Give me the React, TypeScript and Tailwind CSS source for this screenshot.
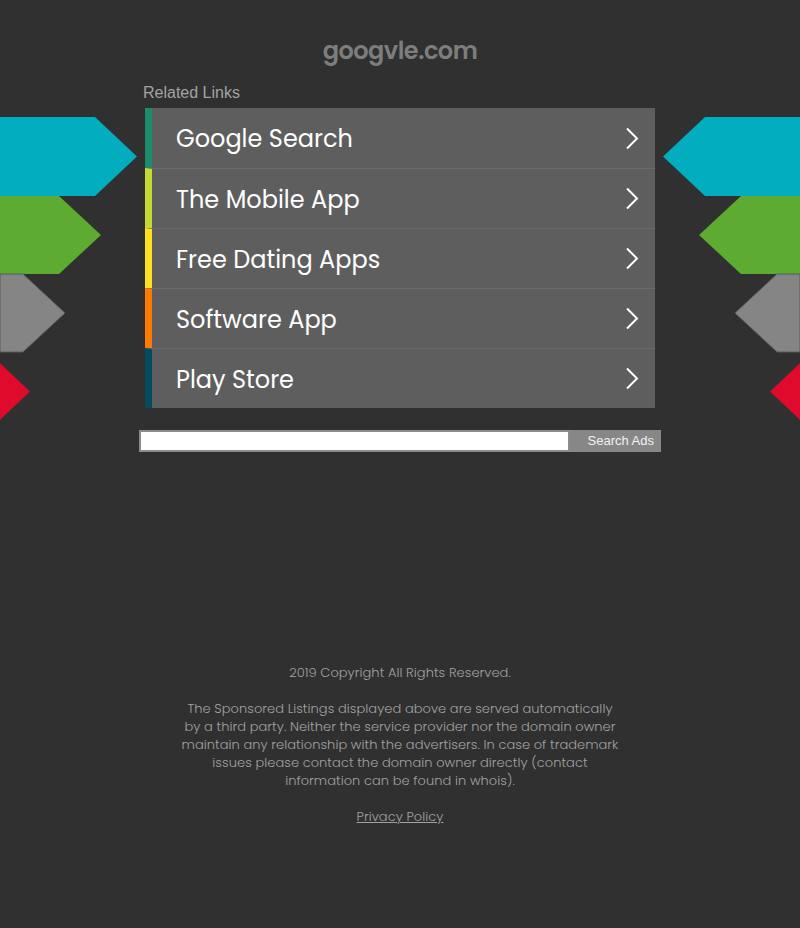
const links = [
  { label: "Google Search", bar: "border-l-[#1d8c6d]" },
  { label: "The Mobile App", bar: "border-l-[#c3d934]" },
  { label: "Free Dating Apps", bar: "border-l-[#fde11c]" },
  { label: "Software App", bar: "border-l-[#fb7a00]" },
  { label: "Play Store", bar: "border-l-[#054b5f]" },
];

function Arrows({ flip }: { flip?: boolean }) {
  return (
    <svg
      width="140"
      height="313"
      viewBox="0 117 140 313"
      className={flip ? "absolute right-0 top-[117px] -scale-x-100" : "absolute left-0 top-[117px]"}
    >
      <polygon points="0,117 95,117 137,156.5 95,196 0,196" fill="#01adbe" />
      <polygon points="0,196 59,196 101,235 59,274 0,274" fill="#5dab31" />
      <polygon
        points="0,274 23,274 65,313 23,352 0,352"
        fill="#858585"
        stroke="#5a5a5a"
        strokeWidth="1"
      />
      <polygon points="-12,352 30,391.5 -12,431" fill="#e00a2d" />
    </svg>
  );
}

function Chevron() {
  return (
    <svg width="14" height="23" viewBox="0 0 14 23" className="shrink-0">
      <polyline
        points="2,1.5 12,11.5 2,21.5"
        fill="none"
        stroke="#ffffff"
        strokeWidth="2"
      />
    </svg>
  );
}

export default function App() {
  return (
    <div className="relative min-h-[928px] overflow-hidden bg-[#303030] font-['Poppins','Inter','Open_Sans',sans-serif]">
      <Arrows />
      <Arrows flip />

      <div className="flex flex-col items-center pt-[35px]">
        <h1 className="h-[32px] text-[24px] font-semibold leading-[32px] tracking-[-0.5px] text-[#7d7d7d]">
          googvle.com
        </h1>

        <div className="mt-[17px] w-[514px] font-['Liberation_Sans',Arial,sans-serif] text-[16px] leading-[18px] text-[#a3a3a3]">
          Related Links
        </div>

        <div className="mt-[6px] flex w-[510px] flex-col">
          {links.map((l, i) => (
            <a
              key={l.label}
              href="#"
              className={
                "flex h-[60px] items-center justify-between border-l-[7px] bg-[#5e5e5e] pl-[24px] pr-[16px] pt-[2px] text-[24px] text-white " +
                l.bar +
                (i > 0 ? " border-t border-t-[#6c6c6c]" : "")
              }
            >
              <span>{l.label}</span>
              <span className="-mt-[2px]">
                <Chevron />
              </span>
            </a>
          ))}
        </div>

        <form className="mt-[22px] flex h-[22px] w-[522px]">
          <input
            type="text"
            className="h-[22px] w-[431px] border-2 border-[#8c8c8c] bg-white outline-none"
          />
          <button
            type="button"
            className="h-[22px] flex-1 bg-[#878787] pr-[7px] text-right font-['Liberation_Sans',Arial,sans-serif] text-[13px] text-[#f2f2f2]"
          >
            Search Ads
          </button>
        </form>

        <div className="mt-[212px] text-center text-[13px] font-light leading-[18px] tracking-[0.05px] text-[#a2a2a2]">
          <p>2019 Copyright All Rights Reserved.</p>
          <p className="mt-[18px]">
            The Sponsored Listings displayed above are served automatically
            <br />
            by a third party. Neither the service provider nor the domain owner
            <br />
            maintain any relationship with the advertisers. In case of trademark
            <br />
            issues please contact the domain owner directly (contact
            <br />
            information can be found in whois).
          </p>
          <p className="mt-[18px]">
            <a href="#" className="underline">
              Privacy Policy
            </a>
          </p>
        </div>
      </div>
    </div>
  );
}
